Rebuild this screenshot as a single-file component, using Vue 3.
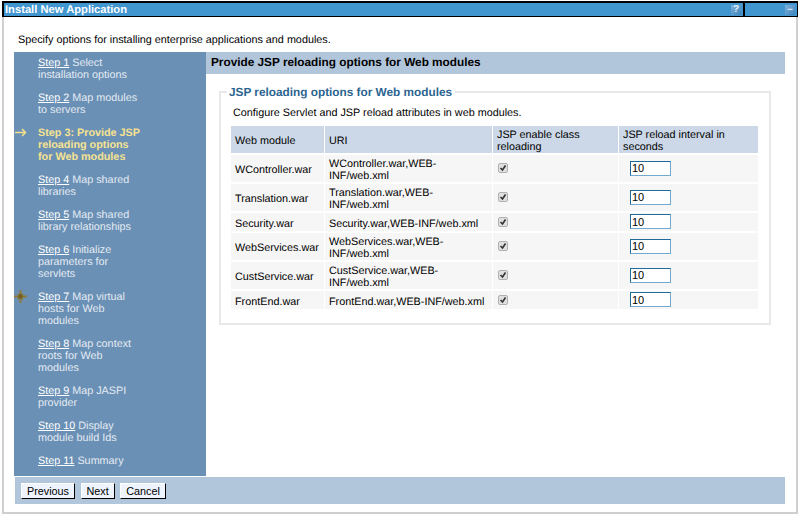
<template>
  <div class="window">
    <div class="titlebar">
      <span class="title">Install New Application</span>
      <span class="tb-btn help">
        <span class="tb-icon">?</span>
      </span>
      <span class="tb-btn mini">
        <span class="tb-icon">–</span>
      </span>
    </div>

    <p class="intro">Specify options for installing enterprise applications and modules.</p>

    <div class="main">
      <nav class="steps">
        <div v-for="s in steps" :key="s.num" class="step" :class="{ current: s.current }">
          <svg v-if="s.current" class="marker" width="12" height="9" viewBox="0 0 12 9">
            <path d="M0 4.5H10M7 1l3.5 3.5L7 8" fill="none" stroke="#f5e08a" stroke-width="1.5" />
          </svg>
          <svg v-if="s.star" class="marker star" width="13" height="13" viewBox="0 0 13 13">
            <path d="M6.5 0V13M0 6.5H13" stroke="#8c7a3c" stroke-width="2" />
            <path d="M3.5 3.5L9.5 9.5M9.5 3.5L3.5 9.5" stroke="#8a8050" stroke-width="1.4" />
            <circle cx="6.5" cy="6.5" r="2.4" fill="#75601f" />
          </svg>
          <template v-if="s.current">Step {{ s.num }}: {{ s.text }}</template>
          <template v-else><a class="step-link">Step {{ s.num }}</a> {{ s.text }}</template>
        </div>
      </nav>

      <div class="content">
        <h2 class="content-head">Provide JSP reloading options for Web modules</h2>
        <fieldset class="group">
          <legend>JSP reloading options for Web modules</legend>
          <p class="group-desc">Configure Servlet and JSP reload attributes in web modules.</p>
          <table class="modules">
            <thead>
              <tr>
                <th class="c1">Web module</th>
                <th class="c2">URI</th>
                <th class="c3">JSP enable class reloading</th>
                <th class="c4">JSP reload interval in seconds</th>
              </tr>
            </thead>
            <tbody>
              <tr v-for="m in modules" :key="m">
                <td>{{ m }}</td>
                <td>{{ m }},WEB-INF/web.xml</td>
                <td class="check-cell">
                  <svg class="check" width="10" height="10" viewBox="0 0 10 10">
                    <rect x="0.5" y="0.5" width="9" height="9" rx="1.5" fill="#e0e0e0" stroke="#b0b0b0" />
                    <path d="M2.5 5l2 2 3-4.5" fill="none" stroke="#333" stroke-width="1.6" />
                  </svg>
                </td>
                <td class="interval-cell"><input class="interval" type="text" value="10" /></td>
              </tr>
            </tbody>
          </table>
        </fieldset>
      </div>
    </div>

    <div class="footer">
      <button class="btn">Previous</button>
      <button class="btn">Next</button>
      <button class="btn">Cancel</button>
    </div>
  </div>
</template>

<script setup>
const steps = [
  { num: 1, text: 'Select installation options' },
  { num: 2, text: 'Map modules to servers' },
  { num: 3, text: 'Provide JSP reloading options for Web modules', current: true },
  { num: 4, text: 'Map shared libraries' },
  { num: 5, text: 'Map shared library relationships' },
  { num: 6, text: 'Initialize parameters for servlets' },
  { num: 7, text: 'Map virtual hosts for Web modules', star: true },
  { num: 8, text: 'Map context roots for Web modules' },
  { num: 9, text: 'Map JASPI provider' },
  { num: 10, text: 'Display module build Ids' },
  { num: 11, text: 'Summary' },
]

const modules = [
  'WController.war',
  'Translation.war',
  'Security.war',
  'WebServices.war',
  'CustService.war',
  'FrontEnd.war',
]
</script>

<style>
html, body {
  margin: 0;
  background: #fff;
  overflow: hidden;
}
</style>

<style scoped>
.window {
  box-sizing: border-box;
  width: 796px;
  height: 513px;
  margin: 1px 0 0 2px;
  border: solid #cfcfcf;
  border-width: 0 2px 2px 2px;
  font-family: "Liberation Sans", Arial, sans-serif;
  font-size: 10.8px;
  line-height: 12px;
  text-rendering: geometricPrecision;
  color: #000;
  background: #fff;
}

.titlebar {
  box-sizing: border-box;
  display: flex;
  align-items: center;
  height: 16px;
  margin: 0 -2px;
  border: 1px solid #000;
  border-width: 2px 1px 1px 2px;
  background: #4296d0;
  color: #fff;
}

.title {
  flex: 1;
  padding-left: 1px;
  font-size: 11.2px;
  font-weight: bold;
}

.tb-btn {
  display: flex;
  justify-content: flex-end;
  align-items: center;
  height: 100%;
  box-sizing: border-box;
  padding-right: 2px;
}

.help {
  width: 14px;
}

.mini {
  width: 54px;
  border-left: 2px solid #000;
}

.tb-icon {
  width: 10px;
  height: 10px;
  background: linear-gradient(135deg, #7fb2dc, #3f83bb);
  color: #e4eff8;
  font-size: 10px;
  font-weight: bold;
  line-height: 10px;
  text-align: center;
}

.intro {
  margin: 0;
  padding: 17px 0 7px 14px;
  height: 11px;
}

.main {
  display: flex;
  height: 424px;
  margin-left: 10px;
}

.steps {
  box-sizing: border-box;
  width: 192px;
  flex: none;
  padding: 5px 0 0 24px;
  background: #6a90b5;
  color: #e4ebf3;
}

.step {
  position: relative;
  width: 106px;
  margin-bottom: 11px;
}

.step-link {
  color: #fff;
  text-decoration: underline;
}

.current {
  color: #f7e391;
  font-weight: bold;
}

.marker {
  position: absolute;
  left: -23px;
  top: 1px;
}

.star {
  left: -24px;
  top: -1px;
}

.content {
  flex: 1;
  margin-right: 11px;
}

.content-head {
  margin: 0;
  height: 22px;
  padding-left: 5px;
  background: #b1c5db;
  font-size: 11.8px;
  font-weight: bold;
  line-height: 21px;
}

.group {
  box-sizing: border-box;
  width: 552px;
  height: 240px;
  margin: 11px 0 0 13px;
  padding: 0 10px;
  border: 2px solid #e8e8e8;
  min-width: 0;
}

.group legend {
  margin-left: -4px;
  padding: 0 3px 0 2px;
  color: #2b6490;
  font-size: 11.8px;
  font-weight: bold;
  line-height: 14px;
}

.group-desc {
  margin: 0;
  padding: 8px 0 7px 2px;
}

.modules {
  width: 528px;
  border-collapse: separate;
  border-spacing: 0;
  table-layout: fixed;
}

.modules th,
.modules td {
  box-sizing: border-box;
  padding: 3px 4px 0;
  border-right: 1px solid #fff;
  border-bottom: 2px solid #fff;
  background: #f6f6f6;
  font-weight: normal;
  text-align: left;
  vertical-align: middle;
}

.modules th {
  background: #ccd8e7;
}

.modules td.check-cell {
  padding-top: 1px;
  padding-bottom: 2px;
}

.modules td.interval-cell {
  padding: 1px 4px 2px 11px;
}

.c1 { width: 94px; }
.c2 { width: 168px; }
.c3 { width: 126px; }

.check {
  display: block;
  margin-left: 1px;
}

.interval {
  display: block;
  box-sizing: border-box;
  width: 41px;
  height: 15px;
  padding: 0 1px;
  border: 1px solid #74a9cf;
  border-top-color: #1f6b9c;
  border-left-color: #1f6b9c;
  font-family: "Liberation Sans", Arial, sans-serif;
  font-size: 11px;
  background: #fff;
}

.footer {
  display: flex;
  align-items: center;
  gap: 5.5px;
  height: 27px;
  margin: 1px 11px 0 11px;
  padding-left: 6px;
  background: #b1c5db;
}

.btn {
  box-sizing: border-box;
  height: 16px;
  padding: 0 5px;
  border: 1px solid;
  border-color: #fff #000 #000 #fff;
  background: #eef4fd;
  font-family: "Liberation Sans", Arial, sans-serif;
  font-size: 10.8px;
  line-height: 12px;
  color: #000;
}
</style>
